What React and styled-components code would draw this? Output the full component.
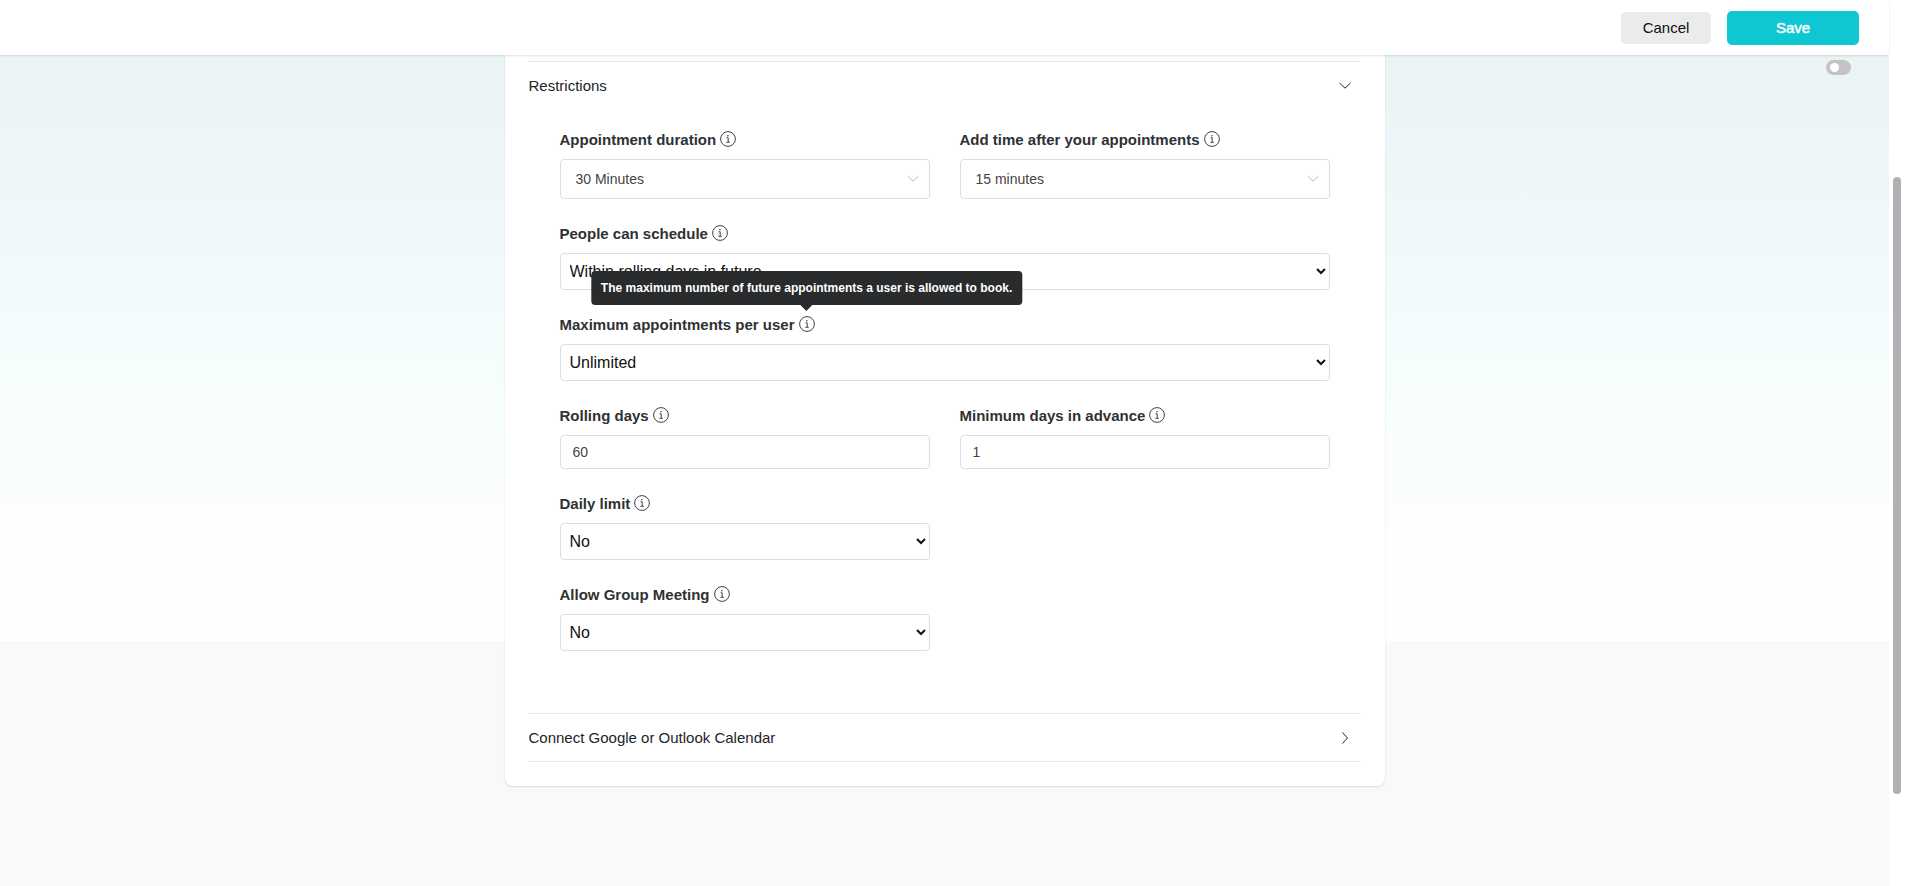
import React from 'react'
import styled, { createGlobalStyle } from 'styled-components'

const GlobalStyle = createGlobalStyle`
  * {
    box-sizing: border-box;
  }
  body {
    margin: 0;
    background: white;
    color: #212529;
    font-family: 'Liberation Sans', Helvetica, Arial, sans-serif;
    font-size: 15px;
  }
  button, select, input {
    font-family: inherit;
    margin: 0;
  }
`

const Layout = styled.div`
  display: flex;
  min-height: 100vh;
`
const Page = styled.div`
  flex: 1;
  display: flex;
  flex-direction: column;
  background: #f7f9fb;
`
const Header = styled.header`
  position: relative;
  z-index: 1;
  display: flex;
  justify-content: flex-end;
  align-items: center;
  gap: 16px;
  height: 55px;
  padding: 0 30px;
  background: white;
  box-shadow: 0 1px 2px rgba(0, 0, 0, 0.12);
`
const Button = styled.button`
  min-width: ${props => (props.$primary ? 132 : 90)}px;
  height: ${props => (props.$primary ? 34 : 32)}px;
  border: 0;
  border-radius: 5px;
  background: ${props => (props.$primary ? '#0fc7d2' : '#ebebeb')};
  color: ${props => (props.$primary ? 'white' : '#111')};
  font-size: 15px;
  -webkit-text-stroke: ${props => (props.$primary ? '0.5px white' : '0')};
`
const Main = styled.main`
  flex: 1;
  display: grid;
  grid-template-columns: 1fr minmax(0, 880px) 1fr;
  align-items: start;
  background: linear-gradient(#eaf4f5, #f0f8fa 30%, #f6fdfd 52%, #fdfefe 80%, white) no-repeat;
  background-size: 100% 586px;
`
const Card = styled.div`
  grid-column: 2;
  padding: 6px 24px 24px;
  background: white;
  border-radius: 0 0 8px 8px;
  box-shadow: 0 1px 2px rgba(0, 0, 0, 0.12);
`
const Toggle = styled.input`
  appearance: none;
  justify-self: end;
  width: 25px;
  height: 15px;
  && {
    margin: 5px 38px 0 0;
  }
  padding: 3px 4px;
  border-radius: 8px;
  background: #c4c2c4;

  &::before {
    content: '';
    display: block;
    width: 9px;
    height: 9px;
    border-radius: 50%;
    background: white;
  }
`
const SectionHeader = styled.button`
  display: flex;
  justify-content: space-between;
  align-items: center;
  width: 100%;
  height: 48px;
  padding: 0 8px 0 0;
  border: 0;
  border-top: 1px solid #e6e8ea;
  background: none;
  color: #212529;
  font-size: 15px;
`
const Section = styled.section`
  &:last-child {
    border-bottom: 1px solid #e6e8ea;
  }
`
const Fields = styled.div`
  display: grid;
  grid-template-columns: 1fr 1fr;
  gap: 22px 30px;
  padding: 18px 31px 62px;
`
const FieldBox = styled.div`
  grid-column: ${props => (props.$wide ? '1 / -1' : 'auto')};
  ${props => props.$first && 'grid-column-start: 1;'}
`
const LabelRow = styled.div`
  display: flex;
  align-items: center;
  gap: 4px;
  height: 24px;
  margin-bottom: 8px;
`
const Label = styled.label`
  color: #2f3133;
  font-size: 15px;
  font-weight: bold;
`
const Info = styled.span`
  position: relative;
  display: flex;
`
const Tooltip = styled.div`
  position: absolute;
  bottom: calc(100% + 11px);
  left: 50%;
  transform: translateX(-50%);
  padding: 8px 10px;
  border-radius: 4px;
  background: #292b2d;
  color: white;
  font-size: 12px;
  font-weight: bold;
  line-height: 18px;
  white-space: nowrap;

  &::after {
    content: '';
    position: absolute;
    top: 100%;
    left: 50%;
    margin-left: -6px;
    border: 6px solid transparent;
    border-top-color: #292b2d;
  }
`
const NativeSelect = styled.select`
  display: block;
  width: 100%;
  height: 37px;
  padding: 5px;
  border: 1px solid #dcdfe1;
  border-radius: 4px;
  background: white;
  color: #111;
  font-size: 16px;
`
const PickerBox = styled.div`
  position: relative;
`
const PickerSelect = styled.select`
  appearance: none;
  display: block;
  width: 100%;
  height: 40px;
  padding: 0 40px 0 15px;
  border: 1px solid #dcdfe1;
  border-radius: 4px;
  background: white;
  color: #444;
  font-size: 14px;
`
const PickerArrow = styled.span`
  position: absolute;
  top: 12px;
  right: 9px;
  display: flex;
  color: #bbbdc0;
  pointer-events: none;
`
const Input = styled.input`
  display: block;
  width: 100%;
  height: 34px;
  padding: 0 12px;
  border: 1px solid #dcdfe1;
  border-radius: 4px;
  background: white;
  color: #444;
  font-size: 14px;
`
const Scrollbar = styled.div`
  display: flex;
  width: 16px;
  padding: 20vh 4px 92px;
  background: white;
`
const Thumb = styled.div`
  flex: 1;
  border-radius: 4px;
  background: #b0b0b5;
`

const Chevron = ({ right }) => (
  <svg width='16' height='16' viewBox='0 0 16 16' fill='none' stroke='currentColor' aria-hidden='true'>
    <path d={right ? 'M5.5 2.5 10.5 8l-5 5.5' : 'M2.5 5 8 10.2l5.5-5.2'} />
  </svg>
)

const InfoIcon = () => (
  <svg width='16' height='16' viewBox='0 0 16 16' fill='none' stroke='#2b2d2f' aria-hidden='true'>
    <circle cx='8' cy='8' r='7.4' strokeWidth='0.9' />
    <path d='M6.6 6.8h1.6v4.3M6.4 11.3h3.4' strokeWidth='0.9' />
    <circle cx='7.9' cy='4.7' r='0.7' fill='#2b2d2f' stroke='none' />
  </svg>
)

const Field = ({ id, label, tooltip, wide, first, children }) => (
  <FieldBox $wide={wide} $first={first}>
    <LabelRow>
      <Label htmlFor={id}>{label}</Label>
      <Info>
        <InfoIcon />
        {tooltip && <Tooltip role='tooltip'>{tooltip}</Tooltip>}
      </Info>
    </LabelRow>
    {children}
  </FieldBox>
)

const Picker = ({ id, value }) => (
  <PickerBox>
    <PickerSelect id={id}>
      <option>{value}</option>
    </PickerSelect>
    <PickerArrow>
      <Chevron />
    </PickerArrow>
  </PickerBox>
)

const Select = ({ id, value }) => (
  <NativeSelect id={id}>
    <option>{value}</option>
  </NativeSelect>
)

export default () => {
  return (
    <Layout>
      <GlobalStyle />
      <Page>
        <Header>
          <Button type='button'>Cancel</Button>
          <Button type='button' $primary>Save</Button>
        </Header>
        <Main>
          <Card>
            <Section>
              <SectionHeader type='button' aria-expanded='true'>
                Restrictions
                <Chevron />
              </SectionHeader>
              <Fields>
                <Field id='duration' label='Appointment duration'>
                  <Picker id='duration' value='30 Minutes' />
                </Field>
                <Field id='buffer' label='Add time after your appointments'>
                  <Picker id='buffer' value='15 minutes' />
                </Field>
                <Field id='schedule' label='People can schedule' wide>
                  <Select id='schedule' value='Within rolling days in future' />
                </Field>
                <Field
                  id='maximum'
                  label='Maximum appointments per user'
                  tooltip='The maximum number of future appointments a user is allowed to book.'
                  wide
                >
                  <Select id='maximum' value='Unlimited' />
                </Field>
                <Field id='rolling' label='Rolling days'>
                  <Input id='rolling' type='number' defaultValue='60' />
                </Field>
                <Field id='advance' label='Minimum days in advance'>
                  <Input id='advance' type='number' defaultValue='1' />
                </Field>
                <Field id='daily' label='Daily limit' first>
                  <Select id='daily' value='No' />
                </Field>
                <Field id='group' label='Allow Group Meeting' first>
                  <Select id='group' value='No' />
                </Field>
              </Fields>
            </Section>
            <Section>
              <SectionHeader type='button' aria-expanded='false'>
                Connect Google or Outlook Calendar
                <Chevron right />
              </SectionHeader>
            </Section>
          </Card>
          <Toggle type='checkbox' role='switch' aria-label='Toggle' />
        </Main>
      </Page>
      <Scrollbar>
        <Thumb />
      </Scrollbar>
    </Layout>
  )
}
